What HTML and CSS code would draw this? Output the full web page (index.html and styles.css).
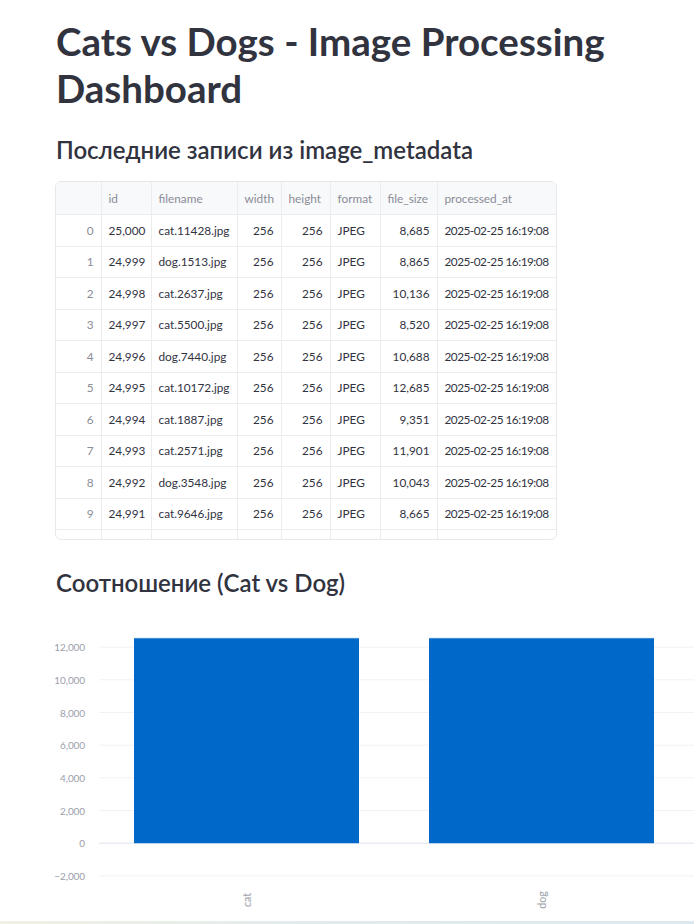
FILE: index.html
```html
<!DOCTYPE html>
<html lang="ru">
<head>
<meta charset="utf-8">
<title>Cats vs Dogs - Image Processing Dashboard</title>
<link rel="stylesheet" href="styles.css">
</head>
<body>
<main class="main">
  <h1 class="title">Cats vs Dogs - Image Processing Dashboard</h1>
  <h2 class="subtitle subtitle-first">Последние записи из image_metadata</h2>
  <div class="grid-wrap">
    <table class="grid">
      <colgroup>
        <col class="c-idx"><col class="c-id"><col class="c-fn"><col class="c-w"><col class="c-h"><col class="c-fmt"><col class="c-fs"><col class="c-pa">
      </colgroup>
      <thead>
        <tr><th></th><th>id</th><th>filename</th><th class="r">width</th><th>height</th><th>format</th><th>file_size</th><th>processed_at</th></tr>
      </thead>
      <tbody>
        <tr><td class="idx">0</td><td class="r">25,000</td><td>cat.11428.jpg</td><td class="r">256</td><td class="r">256</td><td>JPEG</td><td class="r">8,685</td><td class="dt">2025-02-25 16:19:08</td></tr>
        <tr><td class="idx">1</td><td class="r">24,999</td><td>dog.1513.jpg</td><td class="r">256</td><td class="r">256</td><td>JPEG</td><td class="r">8,865</td><td class="dt">2025-02-25 16:19:08</td></tr>
        <tr><td class="idx">2</td><td class="r">24,998</td><td>cat.2637.jpg</td><td class="r">256</td><td class="r">256</td><td>JPEG</td><td class="r">10,136</td><td class="dt">2025-02-25 16:19:08</td></tr>
        <tr><td class="idx">3</td><td class="r">24,997</td><td>cat.5500.jpg</td><td class="r">256</td><td class="r">256</td><td>JPEG</td><td class="r">8,520</td><td class="dt">2025-02-25 16:19:08</td></tr>
        <tr><td class="idx">4</td><td class="r">24,996</td><td>dog.7440.jpg</td><td class="r">256</td><td class="r">256</td><td>JPEG</td><td class="r">10,688</td><td class="dt">2025-02-25 16:19:08</td></tr>
        <tr><td class="idx">5</td><td class="r">24,995</td><td>cat.10172.jpg</td><td class="r">256</td><td class="r">256</td><td>JPEG</td><td class="r">12,685</td><td class="dt">2025-02-25 16:19:08</td></tr>
        <tr><td class="idx">6</td><td class="r">24,994</td><td>cat.1887.jpg</td><td class="r">256</td><td class="r">256</td><td>JPEG</td><td class="r">9,351</td><td class="dt">2025-02-25 16:19:08</td></tr>
        <tr><td class="idx">7</td><td class="r">24,993</td><td>cat.2571.jpg</td><td class="r">256</td><td class="r">256</td><td>JPEG</td><td class="r">11,901</td><td class="dt">2025-02-25 16:19:08</td></tr>
        <tr><td class="idx">8</td><td class="r">24,992</td><td>dog.3548.jpg</td><td class="r">256</td><td class="r">256</td><td>JPEG</td><td class="r">10,043</td><td class="dt">2025-02-25 16:19:08</td></tr>
        <tr><td class="idx">9</td><td class="r">24,991</td><td>cat.9646.jpg</td><td class="r">256</td><td class="r">256</td><td>JPEG</td><td class="r">8,665</td><td class="dt">2025-02-25 16:19:08</td></tr>
        <tr class="spacer"><td></td><td></td><td></td><td></td><td></td><td></td><td></td><td></td></tr>
      </tbody>
    </table>
  </div>
  <h2 class="subtitle subtitle-second">Соотношение (Cat vs Dog)</h2>
  <svg class="chart" width="638" height="304" viewBox="0 0 638 304" xmlns="http://www.w3.org/2000/svg">
    <g class="gridlines">
      <line x1="43" x2="638" y1="27.2" y2="27.2"/>
      <line x1="43" x2="638" y1="59.8" y2="59.8"/>
      <line x1="43" x2="638" y1="92.5" y2="92.5"/>
      <line x1="43" x2="638" y1="125.2" y2="125.2"/>
      <line x1="43" x2="638" y1="157.8" y2="157.8"/>
      <line x1="43" x2="638" y1="190.5" y2="190.5"/>
      <line x1="43" x2="638" y1="255.8" y2="255.8"/>
      <line class="zero" x1="43" x2="638" y1="223.2" y2="223.2"/>
    </g>
    <g class="ticks">
      <text x="29" y="27.2">12,000</text>
      <text x="29" y="59.8">10,000</text>
      <text x="29" y="92.5">8,000</text>
      <text x="29" y="125.2">6,000</text>
      <text x="29" y="157.8">4,000</text>
      <text x="29" y="190.5">2,000</text>
      <text x="29" y="223.2">0</text>
      <text x="29" y="255.8">−2,000</text>
    </g>
    <rect class="bar" x="78" y="18.4" width="225" height="204.8"/>
    <rect class="bar" x="373" y="18.4" width="225" height="204.8"/>
    <line class="bar-edge" x1="78" x2="303" y1="18.4" y2="18.4"/>
    <line class="bar-edge" x1="373" x2="598" y1="18.4" y2="18.4"/>
    <g class="xlabels">
      <text transform="translate(190.5 280) rotate(-90)">cat</text>
      <text transform="translate(485.5 280) rotate(-90)">dog</text>
    </g>
  </svg>
</main>
<div class="bottom-strip"></div>
</body>
</html>
```

FILE: styles.css
```css
html, body {
  margin: 0;
  padding: 0;
  background: #ffffff;
}

body {
  font-family: "Lato", "Open Sans", sans-serif;
  color: #31333f;
}

.main {
  padding: 17.6px 0 0 56px;
  overflow: hidden;
}

.title {
  margin: 0;
  font-size: 38.5px;
  line-height: 47px;
  font-weight: 700;
  color: #31333f;
}

.subtitle {
  margin: 0;
  font-size: 24px;
  line-height: 30px;
  font-weight: 600;
  color: #31333f;
}

.subtitle-first {
  margin-top: 23px;
}

.subtitle-second {
  margin-top: 27.5px;
}

.grid-wrap {
  margin-top: 16.5px;
  margin-left: -1px;
  width: 502px;
  border: 1px solid #e6e8ec;
  border-radius: 6px;
  overflow: hidden;
  box-sizing: border-box;
}

.grid {
  border-collapse: collapse;
  table-layout: fixed;
  width: 100%;
  font-size: 11.8px;
}

.c-idx { width: 45px; }
.c-id { width: 50px; }
.c-fn { width: 86px; }
.c-w { width: 44px; }
.c-h { width: 49px; }
.c-fmt { width: 50px; }
.c-fs { width: 57px; }
.c-pa { width: 119px; }

.grid th,
.grid td {
  padding: 0 7px;
  text-align: left;
  white-space: nowrap;
  overflow: hidden;
  border-right: 1px solid #ececef;
  border-bottom: 1px solid #ececef;
}

.grid th:last-child,
.grid td:last-child {
  border-right: none;
}

.grid th {
  height: 32px;
  font-weight: 400;
  color: #8a8c96;
  background: #f8f9fb;
}

.grid td {
  height: 30.5px;
  color: #31333f;
}

.grid .r {
  text-align: right;
}

.grid td.dt {
  letter-spacing: -0.5px;
}

.grid td.idx {
  text-align: right;
  color: #8a8c96;
}

.grid tr.spacer td {
  height: 9px;
  border-bottom: none;
}

.chart {
  display: block;
  margin-top: 22.5px;
  overflow: visible;
}

.gridlines line {
  stroke: #f0f2f6;
  stroke-width: 1;
}

.gridlines line.zero {
  stroke: #e9ecf2;
  stroke-width: 1.5;
}

.ticks text {
  font-family: "Lato", "Open Sans", sans-serif;
  font-size: 10px;
  letter-spacing: -0.1px;
  fill: #9c9eab;
  text-anchor: end;
  dominant-baseline: central;
}

.bar {
  fill: #0068c9;
}

.bar-edge {
  stroke: #3b8ad6;
  stroke-width: 1;
}

.xlabels text {
  font-family: "Lato", "Open Sans", sans-serif;
  font-size: 10.5px;
  fill: #9c9eab;
  text-anchor: middle;
  dominant-baseline: central;
}

.bottom-strip {
  position: fixed;
  left: 0;
  right: 0;
  bottom: 0;
  height: 3px;
  background: linear-gradient(90deg, #f2f1e3 0%, #e3ecec 40%, #dbe8ef 100%);
}
```
